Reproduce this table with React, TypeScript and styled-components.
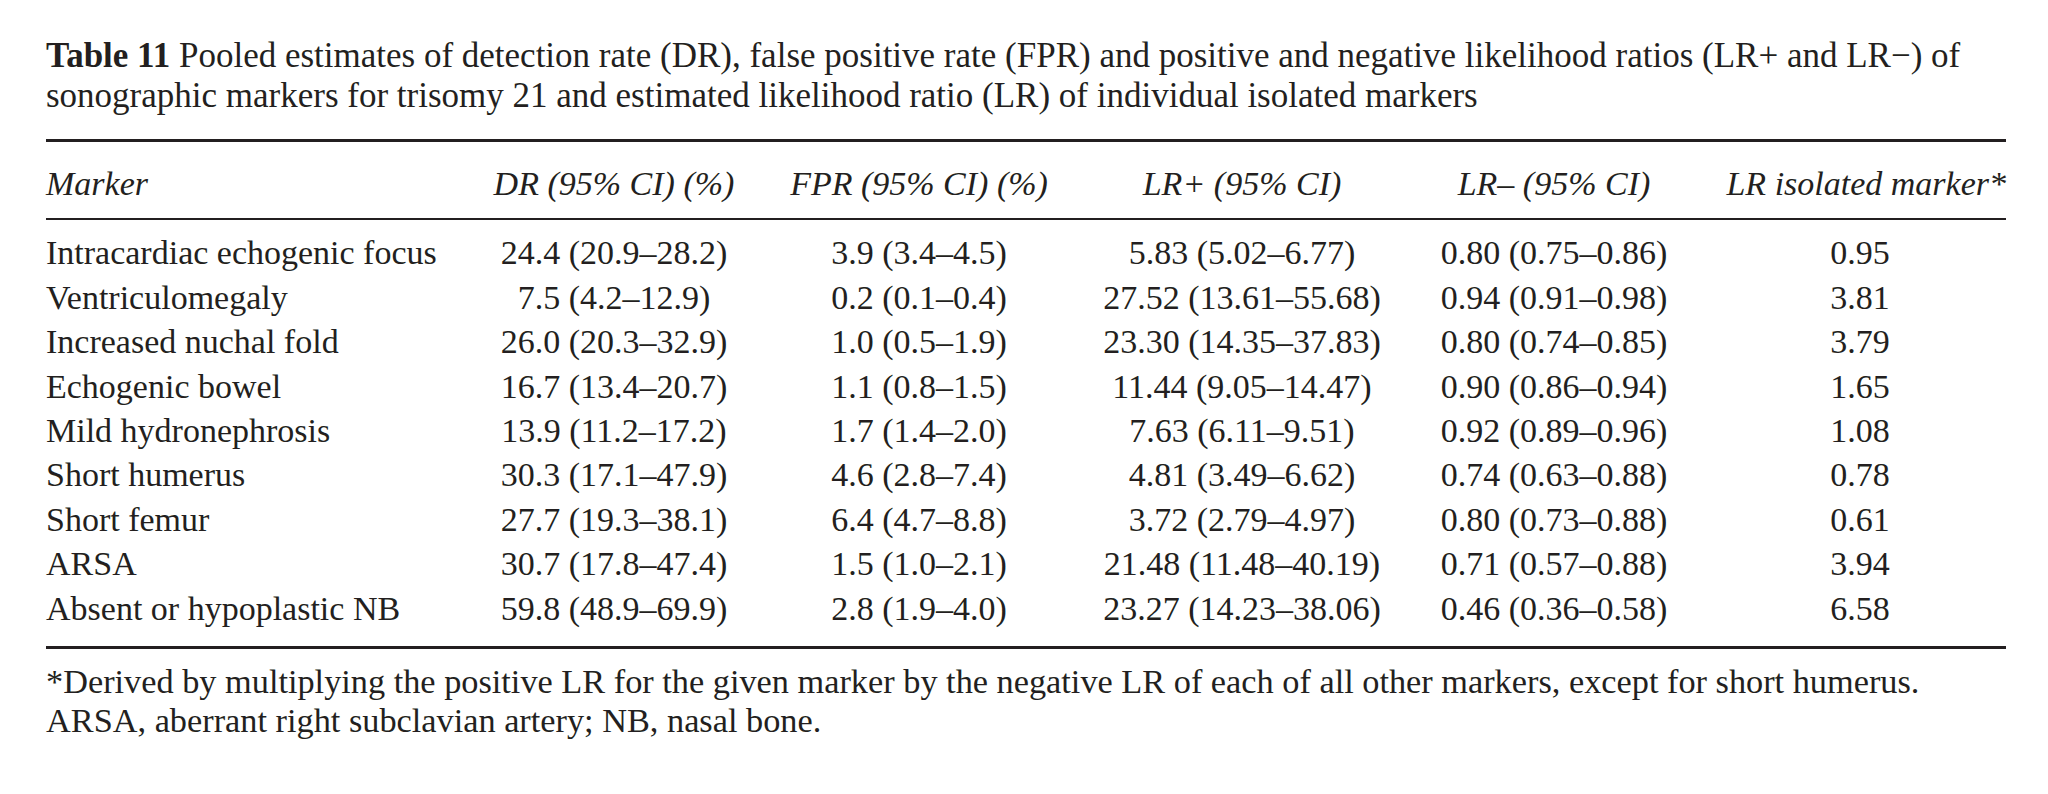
import React from "react";
import styled, { createGlobalStyle } from "styled-components";

const Global = createGlobalStyle`
  html, body { margin: 0; padding: 0; background: #ffffff; }
  body { font-family: "Liberation Serif", "Times New Roman", serif; color: #231f20; }
`;

const COLS = "434px 268px 342px 304px 320px 292px";

const Page = styled.div`
  width: 1960px;
  padding: 36px 0 0 46px;
`;

const Caption = styled.div`
  font-size: 35px;
  line-height: 40px;
  color: #231f20;
`;

const CaptionLine = styled.div`
  white-space: nowrap;
`;

const Label = styled.span`
  font-weight: 700;
`;

const Table = styled.div`
  margin-top: 23px;
  border-top: 3px solid #231f20;
  border-bottom: 3px solid #231f20;
`;

const Row = styled.div<{ $head?: boolean }>`
  display: grid;
  grid-template-columns: ${COLS};
  font-size: 34px;
  line-height: 44.4px;
  font-style: ${(p) => (p.$head ? "italic" : "normal")};
  ${(p) =>
    p.$head
      ? `padding: 20px 0 12px; border-bottom: 2px solid #231f20;`
      : ``}
`;

const Body = styled.div`
  padding: 11px 0 15px;
`;

const Cell = styled.div<{ $align?: "left" | "center" | "right" }>`
  text-align: ${(p) => p.$align ?? "center"};
  white-space: nowrap;
`;

const Notes = styled.div`
  margin-top: 13px;
  font-size: 34.3px;
  line-height: 39px;
  white-space: nowrap;
`;

const headers = [
  "DR (95% CI) (%)",
  "FPR (95% CI) (%)",
  "LR+ (95% CI)",
  "LR\u2013 (95% CI)",
];

const rows: string[][] = [
  ["Intracardiac echogenic focus", "24.4 (20.9\u201328.2)", "3.9 (3.4\u20134.5)", "5.83 (5.02\u20136.77)", "0.80 (0.75\u20130.86)", "0.95"],
  ["Ventriculomegaly", "7.5 (4.2\u201312.9)", "0.2 (0.1\u20130.4)", "27.52 (13.61\u201355.68)", "0.94 (0.91\u20130.98)", "3.81"],
  ["Increased nuchal fold", "26.0 (20.3\u201332.9)", "1.0 (0.5\u20131.9)", "23.30 (14.35\u201337.83)", "0.80 (0.74\u20130.85)", "3.79"],
  ["Echogenic bowel", "16.7 (13.4\u201320.7)", "1.1 (0.8\u20131.5)", "11.44 (9.05\u201314.47)", "0.90 (0.86\u20130.94)", "1.65"],
  ["Mild hydronephrosis", "13.9 (11.2\u201317.2)", "1.7 (1.4\u20132.0)", "7.63 (6.11\u20139.51)", "0.92 (0.89\u20130.96)", "1.08"],
  ["Short humerus", "30.3 (17.1\u201347.9)", "4.6 (2.8\u20137.4)", "4.81 (3.49\u20136.62)", "0.74 (0.63\u20130.88)", "0.78"],
  ["Short femur", "27.7 (19.3\u201338.1)", "6.4 (4.7\u20138.8)", "3.72 (2.79\u20134.97)", "0.80 (0.73\u20130.88)", "0.61"],
  ["ARSA", "30.7 (17.8\u201347.4)", "1.5 (1.0\u20132.1)", "21.48 (11.48\u201340.19)", "0.71 (0.57\u20130.88)", "3.94"],
  ["Absent or hypoplastic NB", "59.8 (48.9\u201369.9)", "2.8 (1.9\u20134.0)", "23.27 (14.23\u201338.06)", "0.46 (0.36\u20130.58)", "6.58"],
];

export default function App() {
  return (
    <Page>
      <Global />
      <Caption>
        <CaptionLine>
          <Label>Table 11</Label> Pooled estimates of detection rate (DR), false positive rate (FPR) and positive and negative likelihood ratios (LR+ and LR&minus;) of
        </CaptionLine>
        <CaptionLine>
          sonographic markers for trisomy 21 and estimated likelihood ratio (LR) of individual isolated markers
        </CaptionLine>
      </Caption>
      <Table>
        <Row $head>
          <Cell $align="left">Marker</Cell>
          {headers.map((h) => (
            <Cell key={h}>{h}</Cell>
          ))}
          <Cell $align="right">LR isolated marker*</Cell>
        </Row>
        <Body>
          {rows.map((r) => (
            <Row key={r[0]}>
              {r.map((c, i) => (
                <Cell key={i} $align={i === 0 ? "left" : "center"}>
                  {c}
                </Cell>
              ))}
            </Row>
          ))}
        </Body>
      </Table>
      <Notes>
        <div>*Derived by multiplying the positive LR for the given marker by the negative LR of each of all other markers, except for short humerus.</div>
        <div>ARSA, aberrant right subclavian artery; NB, nasal bone.</div>
      </Notes>
    </Page>
  );
}
